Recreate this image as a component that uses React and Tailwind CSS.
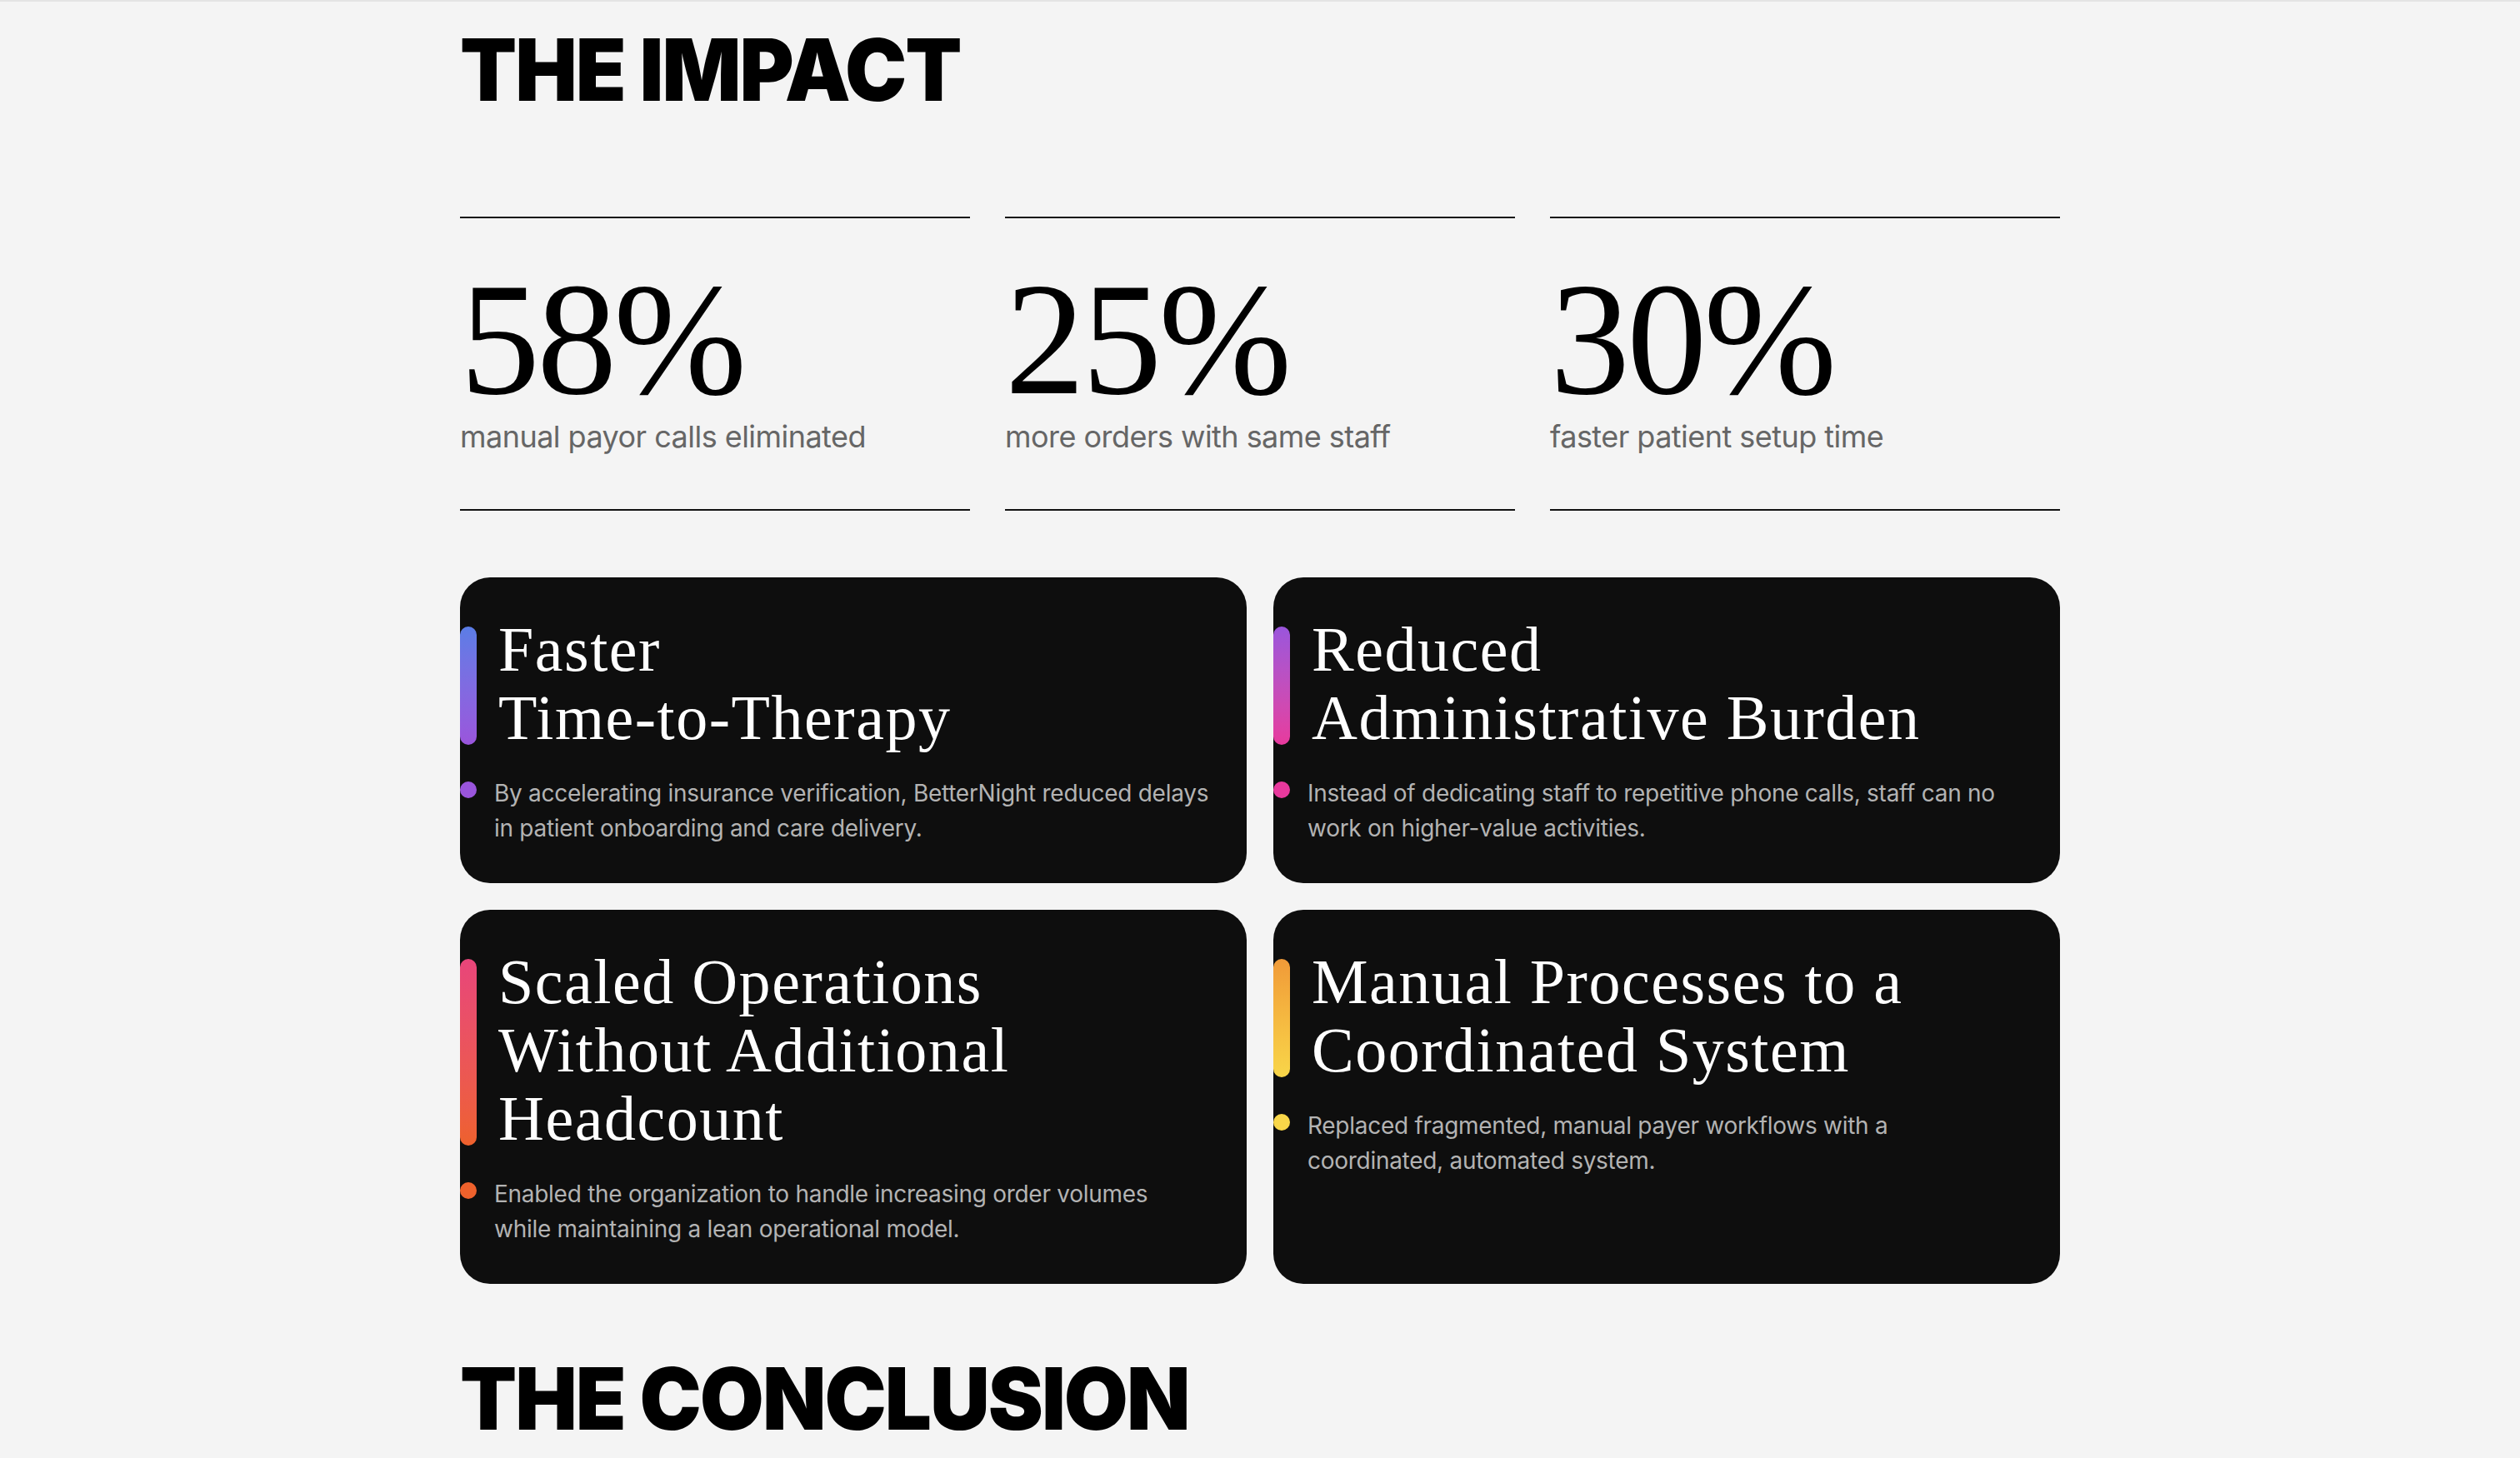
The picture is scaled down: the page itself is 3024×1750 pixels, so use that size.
const stats = [
  { value: "58%", label: "manual payor calls eliminated" },
  { value: "25%", label: "more orders with same staff" },
  { value: "30%", label: "faster patient setup time" },
];

const cards = [
  {
    title: ["Faster", "Time-to-Therapy"],
    body: ["By accelerating insurance verification, BetterNight reduced delays", "in patient onboarding and care delivery."],
    bar: "bg-linear-to-b from-[#5a7de6] to-[#9a55dc]",
    dot: "bg-[#9a55dc]",
  },
  {
    title: ["Reduced", "Administrative Burden"],
    body: ["Instead of dedicating staff to repetitive phone calls, staff can no", "work on higher-value activities."],
    bar: "bg-linear-to-b from-[#9a55dc] to-[#e8399d]",
    dot: "bg-[#e8399d]",
  },
  {
    title: ["Scaled Operations", "Without Additional", "Headcount"],
    body: ["Enabled the organization to handle increasing order volumes", "while maintaining a lean operational model."],
    bar: "bg-linear-to-b from-[#e8457a] to-[#ee612c]",
    dot: "bg-[#ee612c]",
  },
  {
    title: ["Manual Processes to a", "Coordinated System"],
    body: ["Replaced fragmented, manual payer workflows with a", "coordinated, automated system."],
    bar: "bg-linear-to-b from-[#f09a38] to-[#f8d649]",
    dot: "bg-[#f8d649]",
  },
];

function Heading({ children }) {
  return (
    <h2 className="origin-left scale-x-[0.965] font-['Inter',sans-serif] text-[103px] font-black leading-[103px] tracking-[-0.02em] text-black">
      {children}
    </h2>
  );
}

export default function App() {
  return (
    <div className="min-h-screen border-t-2 border-[#e4e4e4] bg-[#f4f4f4]">
      <div className="mx-auto w-[1920px] pt-[30px] pb-[19px]">
        <Heading>THE IMPACT</Heading>

        <div className="mt-[125px] grid grid-cols-3 gap-x-[42px]">
          {stats.map((s) => (
            <div key={s.value} className="border-y-2 border-[#111] pt-[58px] pb-[69px]">
              <div className="font-['Liberation_Serif',serif] text-[192px] leading-[176px] tracking-[-0.02em] text-black">
                {s.value}
              </div>
              <div className="mt-[10px] font-['Inter',sans-serif] text-[36px] leading-[36px] tracking-[-0.015em] text-[#666666]">
                {s.label}
              </div>
            </div>
          ))}
        </div>

        <div className="mt-[80px] grid grid-cols-2 gap-8">
          {cards.map((c) => (
            <div key={c.title[0]} className="rounded-[36px] bg-[#0e0e0e] pt-[45px] pr-[48px] pb-[45px]">
              <div className="flex gap-[26px]">
                <div className={"mt-[14px] mb-[8px] w-[20px] shrink-0 rounded-full " + c.bar} />
                <h3 className="font-['Liberation_Serif',serif] text-[76px] leading-[82px] tracking-[0.02em] text-white">
                  {c.title.map((t) => (
                    <span key={t} className="block whitespace-nowrap">{t}</span>
                  ))}
                </h3>
              </div>
              <div className="mt-[29px] flex gap-[21px]">
                <div className={"mt-[7px] h-[20px] w-[20px] shrink-0 rounded-full " + c.dot} />
                <p className="font-['Inter',sans-serif] text-[28px] leading-[42px] tracking-[-0.01em] text-[#b3b3b3]">
                  {c.body.map((t) => (
                    <span key={t} className="block whitespace-nowrap">{t}</span>
                  ))}
                </p>
              </div>
            </div>
          ))}
        </div>

        <div className="mt-[86px]">
          <Heading>THE CONCLUSION</Heading>
        </div>
      </div>
    </div>
  );
}
